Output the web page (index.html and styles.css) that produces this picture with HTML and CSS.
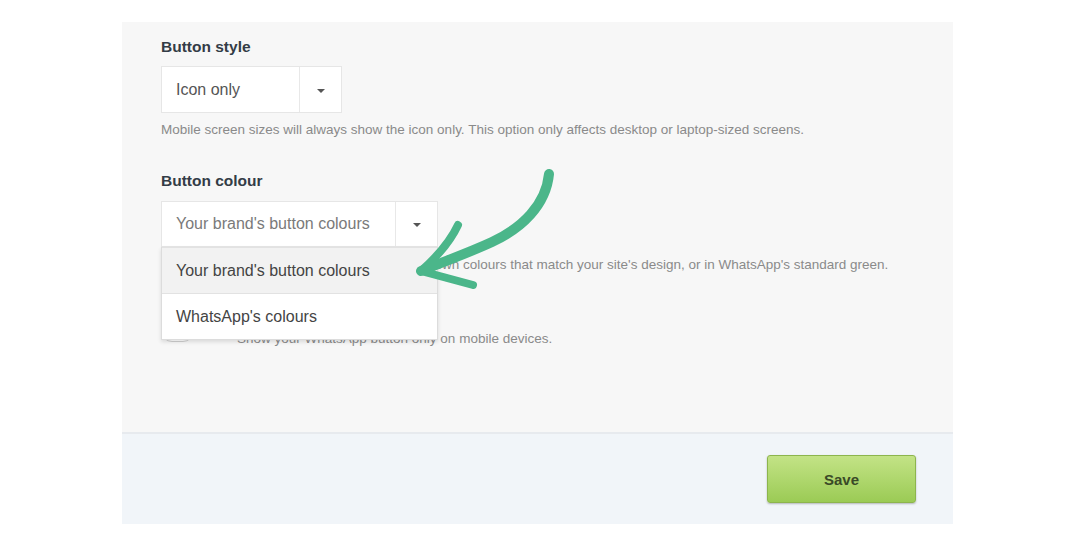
FILE: index.html
```html
<!DOCTYPE html>
<html lang="en">
<head>
<meta charset="utf-8">
<title>Button settings</title>
<link rel="stylesheet" href="styles.css">
</head>
<body>
<div class="panel">
  <div class="main">
    <div class="field">
      <div class="label">Button style</div>
      <div class="select select-style">
        <span class="select-value dark">Icon only</span>
        <span class="select-caret"><span class="caret"></span></span>
      </div>
      <p class="help">Mobile screen sizes will always show the icon only. This option only affects desktop or laptop-sized screens.</p>
    </div>

    <div class="field field-colour">
      <div class="label">Button colour</div>
      <div class="select-wrap">
        <div class="select select-colour">
          <span class="select-value light">Your brand's button colours</span>
          <span class="select-caret"><span class="caret"></span></span>
        </div>
        <ul class="menu">
          <li class="menu-item active">Your brand's button colours</li>
          <li class="menu-item">WhatsApp's colours</li>
        </ul>
      </div>
      <p class="help help-colour">Shows your WhatsApp button in your brand's own colours that match your site's design, or in WhatsApp's standard green.</p>
    </div>

    <div class="toggle-row">
      <span class="toggle"><span class="knob"></span></span>
      <div class="toggle-text">
        <div class="toggle-title">Mobile only</div>
        <p class="help">Show your WhatsApp button only on mobile devices.</p>
      </div>
    </div>
  </div>
  <div class="footer">
    <button class="save">Save</button>
  </div>
</div>

<svg class="annotation" width="1075" height="547" viewBox="0 0 1075 547" aria-hidden="true">
  <path d="M549,174 C546,205 522,228 492,242 C466,254 442,262 421,271" fill="none" stroke="#4bb68a" stroke-width="10" stroke-linecap="round" stroke-linejoin="round"/>
  <path d="M458,225 C451,240 439,255 421,271 L473,285" fill="none" stroke="#4bb68a" stroke-width="8" stroke-linecap="round" stroke-linejoin="round"/>
</svg>
</body>
</html>
```

FILE: styles.css
```css
* { box-sizing: border-box; }

body {
  margin: 0;
  background: #ffffff;
  font-family: "Liberation Sans", Arial, sans-serif;
  position: relative;
}

.panel {
  margin: 22px 0 0 122px;
  width: 831px;
  background: #f7f7f7;
}

.main {
  height: 412px;
  padding: 15px 39px 0;
  border-bottom: 2px solid #e7eaee;
}

.label {
  font-size: 15.5px;
  font-weight: bold;
  line-height: 20px;
  color: #333c46;
  margin-bottom: 9px;
}

.field-colour {
  margin-top: 32px;
}

.field-colour .label {
  margin-bottom: 10px;
}

.select {
  display: flex;
  background: #ffffff;
  border: 1px solid #e6e6e6;
}

.select-style {
  width: 181px;
  height: 47px;
}

.select-colour {
  width: 277px;
  height: 46px;
}

.select-value {
  flex: 1;
  display: flex;
  align-items: center;
  padding-left: 14px;
  font-size: 16px;
}

.select-value.dark { color: #555555; }
.select-value.light { color: #7a7a7a; }

.select-caret {
  width: 42px;
  border-left: 1px solid #e8e8e8;
  display: flex;
  align-items: center;
  justify-content: center;
}

.caret {
  width: 0;
  height: 0;
  border-left: 4px solid transparent;
  border-right: 4px solid transparent;
  border-top: 4px solid #555555;
  margin-top: 2px;
}

.help {
  margin: 8px 0 0;
  font-size: 13.5px;
  line-height: 18px;
  color: #8a8a8a;
}

.help-colour {
  margin-top: 9px;
}

.select-wrap {
  position: relative;
  width: 277px;
}

.menu {
  position: absolute;
  top: 100%;
  left: 0;
  width: 277px;
  margin: 0;
  padding: 0;
  list-style: none;
  background: #ffffff;
  border: 1px solid #dcdcdc;
  border-top: none;
  box-shadow: 0 2px 4px rgba(0, 0, 0, 0.12);
  z-index: 2;
}

.menu-item {
  height: 46px;
  display: flex;
  align-items: center;
  padding-left: 14px;
  font-size: 16px;
  color: #444444;
  border-top: 1px solid #e2e2e2;
}

.menu-item.active {
  background: #f2f2f2;
}

.toggle-row {
  display: flex;
  margin-top: 32px;
}

.toggle {
  width: 33px;
  height: 22px;
  margin-top: 14px;
  border: 1px solid #cfcfcf;
  border-radius: 11px;
  background: #ffffff;
  position: relative;
}

.knob {
  position: absolute;
  top: 1px;
  left: 1px;
  width: 18px;
  height: 18px;
  border-radius: 50%;
  background: #e0e0e0;
}

.toggle-text {
  margin-left: 43px;
}

.toggle-title {
  font-size: 14px;
  font-weight: bold;
  line-height: 20px;
  color: #333c46;
}

.toggle-text .help {
  margin-top: 4px;
}

.footer {
  height: 90px;
  background: #f1f5f9;
  display: flex;
  justify-content: flex-end;
  align-items: center;
  padding-right: 37px;
}

.save {
  width: 149px;
  height: 48px;
  border: 1px solid #8db54d;
  border-radius: 3px;
  background: linear-gradient(#c3e386, #9bcb55);
  box-shadow: 0 1px 2px rgba(0, 0, 0, 0.25);
  font-family: "Liberation Sans", Arial, sans-serif;
  font-size: 15px;
  font-weight: bold;
  color: #3a4a27;
  cursor: pointer;
}

.annotation {
  position: absolute;
  top: 0;
  left: 0;
  pointer-events: none;
  z-index: 5;
}
```
